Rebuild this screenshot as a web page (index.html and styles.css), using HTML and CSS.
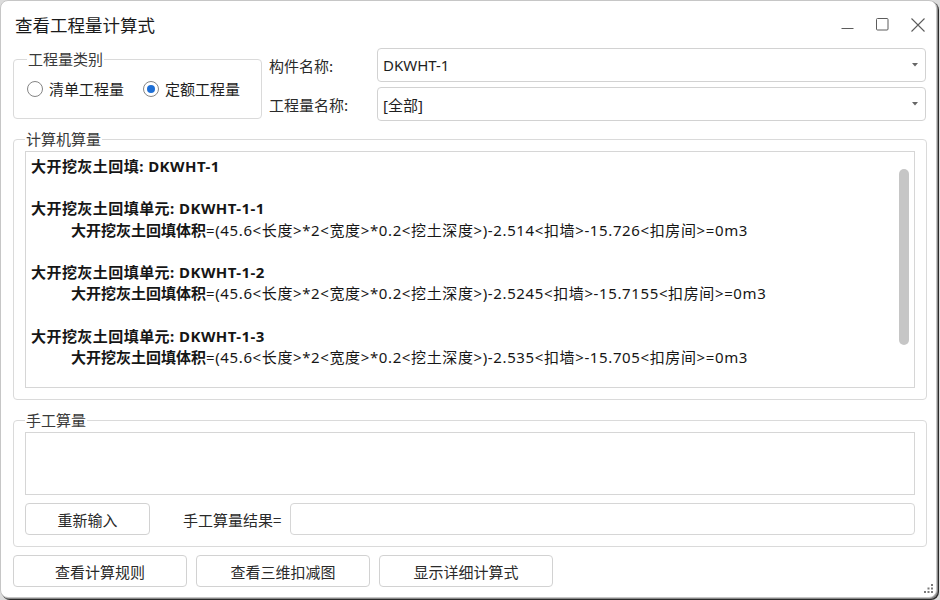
FILE: index.html
```html
<!DOCTYPE html>
<html lang="zh-CN">
<head>
<meta charset="utf-8">
<title>查看工程量计算式</title>
<link rel="stylesheet" href="styles.css">
</head>
<body>
<div class="window">
  <div class="titlebar">
    <div class="title">查看工程量计算式</div>
    <div class="controls">
      <span class="ctl"><svg width="13" height="13" viewBox="0 0 13 13"><path d="M0.5 10.5H12.5" stroke="#5c5c5c" stroke-width="1" fill="none"/></svg></span>
      <span class="ctl"><svg width="13" height="13" viewBox="0 0 13 13"><rect x="0.5" y="0.5" width="11.5" height="11.5" rx="1" stroke="#5c5c5c" stroke-width="1" fill="none"/></svg></span>
      <span class="ctl"><svg width="14" height="14" viewBox="0 0 14 14"><path d="M0.5 0.5L13.5 13.5M13.5 0.5L0.5 13.5" stroke="#5c5c5c" stroke-width="1.1" fill="none"/></svg></span>
    </div>
  </div>
  <div class="content">
    <div class="top">
      <fieldset class="group kind">
        <legend>工程量类别</legend>
        <div class="radios">
          <label class="radio"><span class="circle"></span>清单工程量</label>
          <label class="radio checked"><span class="circle"></span>定额工程量</label>
        </div>
      </fieldset>
      <div class="form">
        <span class="lbl">构件名称:</span>
        <div class="combo"><span>DKWHT-1</span><svg width="6" height="4" viewBox="0 0 6 4"><path d="M0 0H6L3 3.5Z" fill="#666"/></svg></div>
        <span class="lbl">工程量名称:</span>
        <div class="combo"><span>[全部]</span><svg width="6" height="4" viewBox="0 0 6 4"><path d="M0 0H6L3 3.5Z" fill="#666"/></svg></div>
      </div>
    </div>

    <fieldset class="group calc">
      <legend>计算机算量</legend>
      <div class="textbox">
        <div class="lines">
          <div class="b">大开挖灰土回填: DKWHT-1</div>
          <div class="blank"></div>
          <div class="b">大开挖灰土回填单元: DKWHT-1-1</div>
          <div class="f"><b>大开挖灰土回填体积</b><span class="expr">=(45.6&lt;长度&gt;*2&lt;宽度&gt;*0.2&lt;挖土深度&gt;)-2.514&lt;扣墙&gt;-15.726&lt;扣房间&gt;=0m3</span></div>
          <div class="blank"></div>
          <div class="b">大开挖灰土回填单元: DKWHT-1-2</div>
          <div class="f"><b>大开挖灰土回填体积</b><span class="expr">=(45.6&lt;长度&gt;*2&lt;宽度&gt;*0.2&lt;挖土深度&gt;)-2.5245&lt;扣墙&gt;-15.7155&lt;扣房间&gt;=0m3</span></div>
          <div class="blank"></div>
          <div class="b">大开挖灰土回填单元: DKWHT-1-3</div>
          <div class="f"><b>大开挖灰土回填体积</b><span class="expr">=(45.6&lt;长度&gt;*2&lt;宽度&gt;*0.2&lt;挖土深度&gt;)-2.535&lt;扣墙&gt;-15.705&lt;扣房间&gt;=0m3</span></div>
        </div>
        <div class="vscroll"><div class="thumb"></div></div>
      </div>
    </fieldset>

    <fieldset class="group manual">
      <legend>手工算量</legend>
      <div class="memo"></div>
      <div class="mrow">
        <button class="btn reinput">重新输入</button>
        <span class="rlabel">手工算量结果=</span>
        <div class="input"></div>
      </div>
    </fieldset>

    <div class="actions">
      <button class="btn act">查看计算规则</button>
      <button class="btn act">查看三维扣减图</button>
      <button class="btn act">显示详细计算式</button>
    </div>
  </div>
  <svg class="grip" width="11" height="11" viewBox="0 0 11 11">
    <rect x="8" y="0" width="2" height="2" fill="#7a7a7a"/>
    <rect x="4.5" y="3.5" width="2" height="2" fill="#7a7a7a"/>
    <rect x="8" y="3.5" width="2" height="2" fill="#7a7a7a"/>
    <rect x="1" y="7" width="2" height="2" fill="#7a7a7a"/>
    <rect x="4.5" y="7" width="2" height="2" fill="#7a7a7a"/>
    <rect x="8" y="7" width="2" height="2" fill="#7a7a7a"/>
  </svg>
</div>
</body>
</html>
```

FILE: styles.css
```css
* { box-sizing: border-box; }
html, body { margin: 0; padding: 0; }
body {
  background: #dcdcdc;
  width: 940px;
  height: 600px;
  overflow: hidden;
  font-family: "Noto Sans", "Noto Sans CJK SC", sans-serif;
  color: #1e1e1e;
}
.window {
  position: relative;
  width: 937px;
  height: 598px;
  background: #fff;
  border: 1px solid #c6c6c6;
  border-radius: 8px;
  box-shadow: 1px 1px 0 #888, 2px 2px 0 #2a2a2a;
  display: flex;
  flex-direction: column;
}
.titlebar {
  height: 47px;
  display: flex;
  align-items: center;
  justify-content: space-between;
}
.title {
  padding-left: 14px;
  font-size: 17.5px;
  color: #1a1a1a;
  font-family: "Noto Sans CJK SC", sans-serif;
}
.controls {
  display: flex;
  margin-right: 1px;
  align-self: stretch;
}
.ctl {
  width: 35px;
  display: flex;
  align-items: center;
  justify-content: center;
}
.content {
  padding: 0 9px 0 12px;
  display: flex;
  flex-direction: column;
  font-size: 15px;
}
.top {
  display: flex;
  align-items: flex-start;
}
.group {
  margin: 0;
  border: 1px solid #dadada;
  border-radius: 4px;
  min-width: 0;
}
.group legend {
  font-size: 15px;
  line-height: 20px;
  padding: 0 1px;
  margin-left: 0;
  color: #3a3a3a;
  font-family: "Noto Sans CJK SC", sans-serif;
}
.kind {
  width: 249px;
  margin-top: 1px;
  padding: 10px 10px 19px 13px;
}
.radios {
  display: flex;
  line-height: 20px;
  gap: 19px;
}
.radio {
  display: flex;
  align-items: center;
  gap: 6px;
  font-family: "Noto Sans CJK SC", sans-serif;
  color: #1e1e1e;
}
.circle {
  width: 16px;
  height: 16px;
  border: 1px solid #858585;
  border-radius: 50%;
  display: flex;
  align-items: center;
  justify-content: center;
}
.checked .circle::after {
  content: "";
  width: 8px;
  height: 8px;
  border-radius: 50%;
  background: #1e6fd6;
}
.form {
  flex: 1;
  margin-left: 7px;
  margin-right: 1px;
  display: grid;
  grid-template-columns: 108px 1fr;
  row-gap: 5px;
  align-items: center;
}
.lbl {
  color: #2a2a2a;
  font-family: "Noto Sans CJK SC", sans-serif;
}
.combo {
  height: 34px;
  border: 1px solid #d2d2d2;
  border-radius: 4px;
  display: flex;
  align-items: center;
  justify-content: space-between;
  padding: 0 7px 0 5px;
  color: #1e1e1e;
}
.calc {
  margin-top: 8px;
  padding: 2px 11px 11px 11px;
}
.textbox {
  height: 237px;
  border: 1px solid #d6d6d6;
  display: flex;
}
.lines {
  flex: 1;
  padding: 4px 0 0 5px;
  line-height: 21.2px;
  font-size: 15px;
  white-space: nowrap;
  color: #161616;
}
.lines .b { font-weight: bold; letter-spacing: 0.45px; }
.lines .blank { height: 21.2px; }
.lines .f { padding-left: 40px; }
.lines .f b { font-weight: bold; }
.lines .expr { letter-spacing: 0.62px; }
.vscroll {
  width: 10px;
  margin-right: 5px;
  padding-top: 17px;
}
.thumb {
  height: 176px;
  border-radius: 5px;
  background: #c6c6c6;
}
.manual {
  margin-top: 10px;
  padding: 2px 11px 11px 11px;
}
.memo {
  height: 63px;
  border: 1px solid #d6d6d6;
}
.mrow {
  margin-top: 8px;
  display: flex;
  align-items: center;
}
.btn {
  height: 32px;
  background: #fff;
  border: 1px solid #d2d2d2;
  border-radius: 4px;
  font-family: "Noto Sans CJK SC", sans-serif;
  font-size: 15px;
  color: #2a2a2a;
  padding: 0;
}
.reinput { width: 125px; }
.rlabel {
  margin-left: 33px;
  width: 107px;
  color: #2a2a2a;
  font-family: "Noto Sans CJK SC", sans-serif;
}
.input {
  flex: 1;
  height: 32px;
  border: 1px solid #d6d6d6;
  border-radius: 4px;
}
.actions {
  margin-top: 8px;
  display: flex;
  gap: 9px;
}
.act { width: 174px; }
.grip {
  position: absolute;
  right: 2px;
  bottom: 2px;
}
```
